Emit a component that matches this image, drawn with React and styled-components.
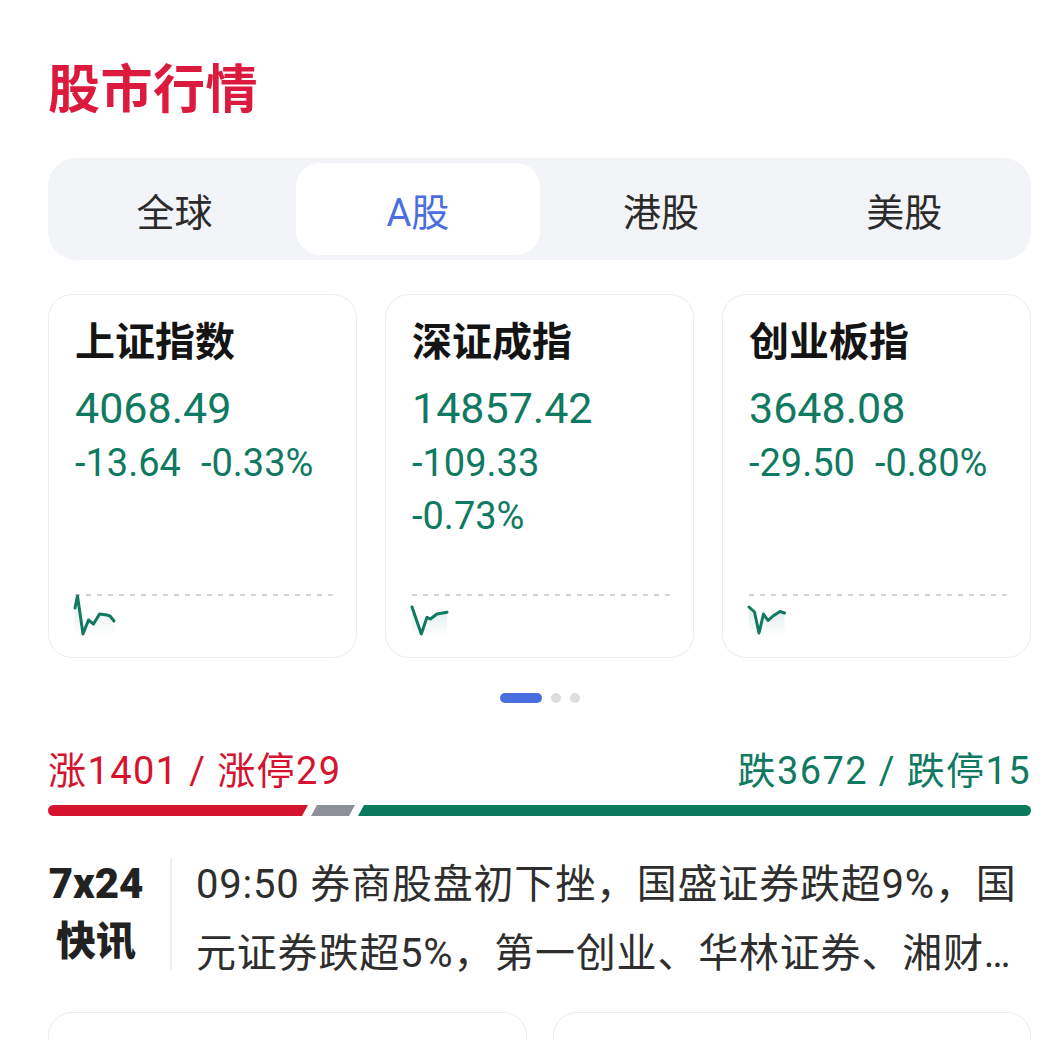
import React from 'react';
import styled, { createGlobalStyle } from 'styled-components';

const GlobalStyle = createGlobalStyle`
  html, body {
    margin: 0;
    padding: 0;
    background: #ffffff;
  }
  body {
    font-family: Roboto, "Noto Sans CJK SC", sans-serif;
    overflow: hidden;
  }
`;

const RED = '#d5132f';
const GREEN = '#0f7a61';
const BLUE = '#4a6ee0';

// page wrapper
const Page = styled.div`
  padding: 57px 18px 0 48px;
  height: 1040px;
  box-sizing: border-box;
  overflow: hidden;
`;

const Title = styled.h1`
  margin: 0;
  font-size: 52px;
  line-height: 68px;
  font-weight: 700;
  color: #dc1a3e;
  letter-spacing: 0.5px;
`;

const TabBar = styled.div`
  margin-top: 33px;
  height: 102px;
  box-sizing: border-box;
  padding: 5px;
  display: grid;
  grid-template-columns: repeat(4, 1fr);
  background: #f3f4f8;
  border-radius: 28px;
`;

const Tab = styled.div`
  display: flex;
  align-items: center;
  justify-content: center;
  border-radius: 24px;
  font-size: 38px;
  color: ${(p) => (p.$active ? BLUE : '#2b2b2b')};
  background: ${(p) => (p.$active ? '#ffffff' : 'transparent')};
`;

const CardRow = styled.div`
  margin-top: 34px;
  display: grid;
  grid-template-columns: repeat(3, 1fr);
  gap: 28px;
`;

const Card = styled.div`
  height: 364px;
  box-sizing: border-box;
  padding: 22px 20px 21px 26px;
  border: 1.5px solid #ececec;
  border-radius: 24px;
  display: flex;
  flex-direction: column;
`;

const CardTitle = styled.div`
  font-size: 40px;
  line-height: 52px;
  font-weight: 700;
  color: #141414;
`;

const Value = styled.div`
  margin-top: 12px;
  font-size: 43px;
  line-height: 54px;
  color: ${GREEN};
`;

const Changes = styled.div`
  margin-top: 2px;
  font-size: 38px;
  line-height: 53px;
  color: ${GREEN};
`;

const Change = styled.span`
  display: inline-block;
  margin-right: 20px;
`;

const ChartBox = styled.div`
  margin-top: auto;
  height: 45px;
`;

const Dots = styled.div`
  margin-top: 35px;
  display: flex;
  justify-content: center;
  gap: 9px;
`;

const Dot = styled.div`
  width: ${(p) => (p.$active ? '42px' : '10px')};
  height: 10px;
  border-radius: 5px;
  background: ${(p) => (p.$active ? BLUE : '#dedede')};
`;

const Breadth = styled.div`
  margin-top: 44px;
  display: flex;
  justify-content: space-between;
  font-size: 38px;
  line-height: 48px;
  letter-spacing: 1.4px;
`;

const BreadthText = styled.span`
  color: ${(p) => p.$color};
`;

const Bar = styled.div`
  margin-top: 10px;
  height: 11px;
  display: flex;
  gap: 3px;
`;

const Segment = styled.div`
  height: 100%;
  background: ${(p) => p.$color};
  flex: ${(p) => p.$flex};
  border-radius: ${(p) => p.$radius};
  clip-path: ${(p) => p.$clip};
`;

const News = styled.div`
  margin-top: 34px;
  display: flex;
  align-items: flex-start;
`;

const NewsLabel = styled.div`
  width: 96px;
  margin-top: 5px;
  text-align: center;
  color: #222;
  font-weight: 900;
`;

const LabelLine = styled.div`
  font-size: ${(p) => p.$size};
  line-height: 58px;
`;

const Divider = styled.div`
  width: 2px;
  height: 112px;
  margin: 8px 24px 0 26px;
  background: #efefef;
`;

const NewsText = styled.div`
  flex: 1;
  font-size: 40px;
  line-height: 69px;
  letter-spacing: 0.8px;
  color: #2e2e2e;
`;

const BottomRow = styled.div`
  margin-top: 24px;
  display: grid;
  grid-template-columns: 1fr 1fr;
  gap: 26px;
`;

const BottomCard = styled.div`
  height: 300px;
  box-sizing: border-box;
  padding: 24px 26px;
  border: 1.5px solid #ececec;
  border-radius: 24px;
  font-size: 40px;
  line-height: 52px;
  font-weight: 700;
  color: #141414;
`;

const indices = [
  {
    name: '上证指数',
    value: '4068.49',
    change: '-13.64',
    pct: '-0.33%',
    points: [[0, 17], [2.5, 5], [8, 43], [13.5, 29], [18.5, 33], [24.5, 23], [32, 24], [35, 25], [39, 30]],
  },
  {
    name: '深证成指',
    value: '14857.42',
    change: '-109.33',
    pct: '-0.73%',
    points: [[0, 16], [9.3, 43], [15, 26.3], [18.3, 28], [25, 23], [35, 21.3]],
  },
  {
    name: '创业板指',
    value: '3648.08',
    change: '-29.50',
    pct: '-0.80%',
    points: [[0, 16], [5.5, 21], [10, 42], [14.5, 23], [19, 29.5], [24, 25], [31, 20.5], [35.5, 22]],
  },
];

function Sparkline({ id, points }) {
  const line = points.map((p) => p.join(',')).join(' ');
  const last = points[points.length - 1];
  const area = `${line} ${last[0]},45 0,45`;
  return (
    <svg width="258" height="45" viewBox="0 0 258 45" style={{ overflow: 'visible', display: 'block' }}>
      <defs>
        <linearGradient id={id} x1="0" y1="0" x2="0" y2="1">
          <stop offset="0" stopColor={GREEN} stopOpacity="0.14" />
          <stop offset="1" stopColor={GREEN} stopOpacity="0" />
        </linearGradient>
      </defs>
      <line x1="0" y1="4" x2="256" y2="4" stroke="#d2d2d2" strokeWidth="2" strokeDasharray="5 6" />
      <circle cx="257" cy="4" r="1" fill="#d2d2d2" />
      <polygon points={area} fill={`url(#${id})`} />
      <polyline points={line} fill="none" stroke={GREEN} strokeWidth="3" strokeLinejoin="round" strokeLinecap="round" />
    </svg>
  );
}

export default function App() {
  const tabs = ['全球', 'A股', '港股', '美股'];
  return (
    <Page>
      <GlobalStyle />
      <Title>股市行情</Title>

      <TabBar>
        {tabs.map((t) => (
          <Tab key={t} $active={t === 'A股'}>
            {t}
          </Tab>
        ))}
      </TabBar>

      <CardRow>
        {indices.map((item, i) => (
          <Card key={item.name}>
            <CardTitle>{item.name}</CardTitle>
            <Value>{item.value}</Value>
            <Changes>
              <Change>{item.change}</Change>
              <Change>{item.pct}</Change>
            </Changes>
            <ChartBox>
              <Sparkline id={`spark-${i}`} points={item.points} />
            </ChartBox>
          </Card>
        ))}
      </CardRow>

      <Dots>
        <Dot $active />
        <Dot />
        <Dot />
      </Dots>

      <Breadth>
        <BreadthText $color={RED}>涨1401 / 涨停29</BreadthText>
        <BreadthText $color={GREEN}>跌3672 / 跌停15</BreadthText>
      </Breadth>
      <Bar>
        <Segment
          $color={RED}
          $flex="0 0 260px"
          $radius="6px 0 0 6px"
          $clip="polygon(0 0, 100% 0, calc(100% - 6px) 100%, 0 100%)"
        />
        <Segment
          $color="#8d9098"
          $flex="0 0 44px"
          $radius="0"
          $clip="polygon(6px 0, 100% 0, calc(100% - 6px) 100%, 0 100%)"
        />
        <Segment
          $color="#0c7a5f"
          $flex="1"
          $radius="0 6px 6px 0"
          $clip="polygon(6px 0, 100% 0, 100% 100%, 0 100%)"
        />
      </Bar>

      <News>
        <NewsLabel>
          <LabelLine $size="42px">7x24</LabelLine>
          <LabelLine $size="40px">快讯</LabelLine>
        </NewsLabel>
        <Divider />
        <NewsText>
          09:50 券商股盘初下挫，国盛证券跌超9%，国元证券跌超5%，第一创业、华林证券、湘财…
        </NewsText>
      </News>

      <BottomRow>
        <BottomCard>行业板块</BottomCard>
        <BottomCard>热门个股</BottomCard>
      </BottomRow>
    </Page>
  );
}
